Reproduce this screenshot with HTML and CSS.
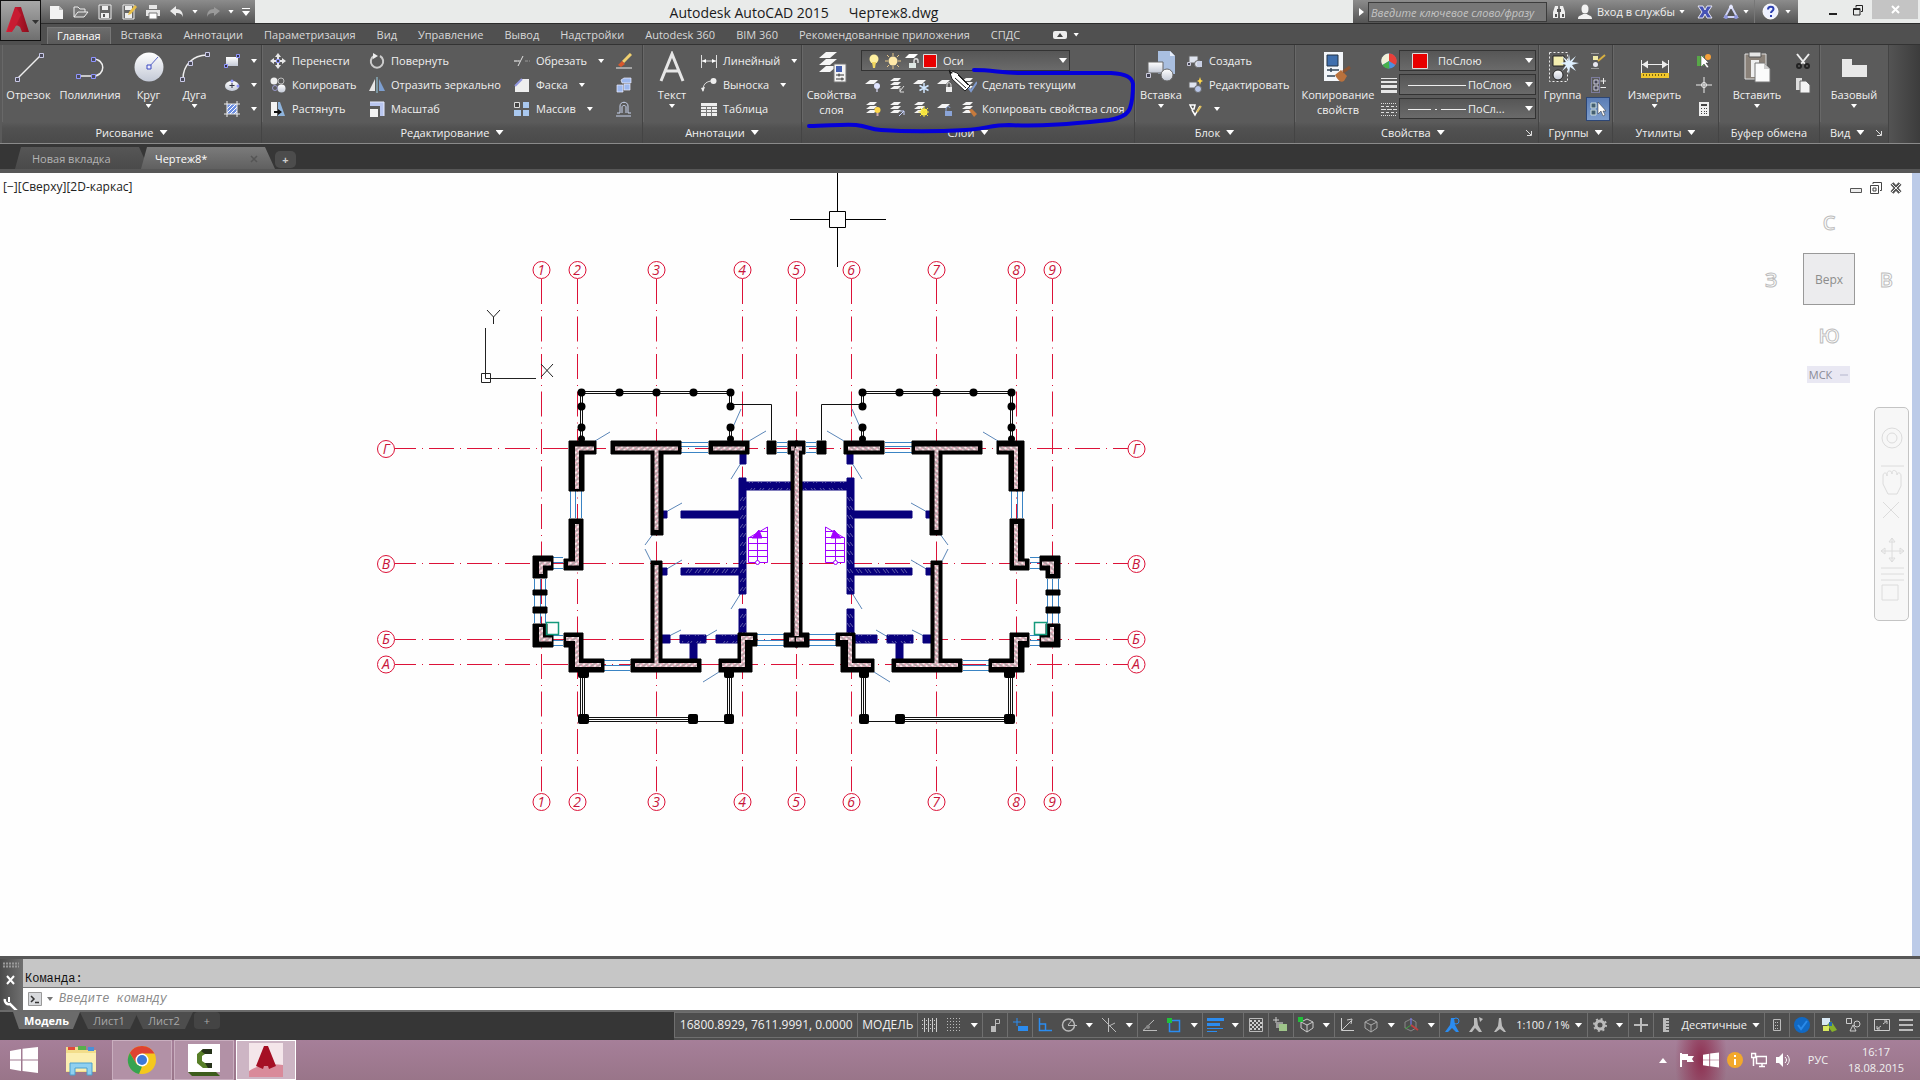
FILE: index.html
```html
<!DOCTYPE html>
<html lang="ru">
<head>
<meta charset="utf-8">
<title>Autodesk AutoCAD 2015 Чертеж8.dwg</title>
<link rel="stylesheet" href="styles.css">
</head>
<body>
<svg class="defs" width="0" height="0" aria-hidden="true">
  <defs>
    <linearGradient id="silver" x1="0" y1="0" x2="0" y2="1"><stop offset="0" stop-color="#fff"/><stop offset="1" stop-color="#c3c9d6"/></linearGradient>
    <linearGradient id="ruby" x1="0" y1="0" x2="1" y2="0"><stop offset="0" stop-color="#e0243c"/><stop offset="1" stop-color="#8d0c1c"/></linearGradient>
    <symbol id="i-sheets" viewBox="0 0 16 16"><path d="M5 1h7l-3 3H1zM5 5h7l-3 3H1zM5 9h7l-3 3H1z" fill="#f4f4f4"/></symbol>
    <symbol id="i-sheet" viewBox="0 0 16 16"><path d="M5 3h8l-4 4H0z" fill="#f4f4f4"/></symbol>
    <symbol id="i-winlogo" viewBox="0 0 28 26"><path d="M0 4l11-2v10.500H0zM12.500 1.800L28 0v12.500H12.500zM0 13.500h11V24L0 22zM12.500 13.500H28V26l-15.500-2z" fill="#fff"/></symbol>
  </defs>
</svg>

<header class="top">
  <button class="app-button" aria-label="Меню приложения">
    <svg width="38" height="38" viewBox="0 0 38 38"><path d="M13 5h6l8 25h-7l-2-5c-2-2-4-2-5 0l-3 5H4z" fill="url(#ruby)"/><path d="M14 5l-9 25 7-3 4-8 3-6z" fill="#c81c32"/><path d="M30 18h7l-3.500 4z" fill="#333"/></svg>
  </button>
  <div class="titlebar">
    <div class="qat">
      <button aria-label="Создать"><svg width="16" height="16"><path d="M1 2h9l4 4v9H1z" fill="#f2f2f2"/><path d="M10 2v4h4" fill="#bbb"/></svg></button>
      <button aria-label="Открыть"><svg width="16" height="16"><path d="M1 13V3h4l2 2h5v3M1 13L5 8h10l-4 5z" fill="#777" stroke="#eee"/></svg></button>
      <button aria-label="Сохранить"><svg width="16" height="16"><path d="M2 1h12v14H2z" fill="#666" stroke="#eee"/><path d="M5 2h6v4H5zM4 9h8v5H4z" fill="#eee"/><path d="M6 10h2v3H6z" fill="#555"/></svg></button>
      <button aria-label="Сохранить как"><svg width="16" height="16"><path d="M2 1h11v14H2z" fill="#666" stroke="#eee"/><path d="M4 9h7v5H4zM4 2h7v4H4z" fill="#eee"/><path d="M7 11l1-3 6-7 2 2-6 7z" fill="#e9c04a"/></svg></button>
      <button aria-label="Печать"><svg width="16" height="16"><path d="M4 1h8v4H4zM1 6h14v6H1z" fill="#e6e6e6"/><path d="M4 9h8v6H4z" fill="#fff" stroke="#777"/></svg></button>
      <button aria-label="Отменить"><svg width="16" height="16"><path d="M7 2L1 7l6 5V9c4 0 6 1 7 4 0-5-2-8-7-8z" fill="#eaeaea"/></svg></button>
      <button class="narrow" aria-label="Список отмены"><i class="caret"></i></button>
      <button aria-label="Повторить"><svg width="16" height="16"><path d="M9 3l6 4-6 5V9C5 9 3 10 2 13c0-5 2-8 7-8z" fill="#9a9a9a"/></svg></button>
      <button class="narrow" aria-label="Список повтора"><i class="caret"></i></button>
      <button class="more" aria-label="Настройка панели"><svg width="10" height="10"><path d="M1 1h8v1H1zM1 4h8L5 9z" fill="#fff"/></svg></button>
    </div>
    <div class="caption"><span>Autodesk AutoCAD 2015</span><span>Чертеж8.dwg</span></div>
    <div class="infocenter">
      <button class="expand" aria-label="Свернуть"><svg width="6" height="8"><path d="M1 0l5 4-5 4z" fill="#fff"/></svg></button>
      <input type="text" aria-label="Поиск" placeholder="Введите ключевое слово/фразу">
      <button aria-label="Найти"><svg width="16" height="16"><path d="M2 14V8l2-6h3v12zM9 14V2h3l2 6v6z" fill="#eee"/><path d="M4 10h2v3H4zM11 10h2v3h-2zM6 5h4v3H6z" fill="#555"/></svg></button>
      <button class="signin"><svg width="16" height="16"><ellipse cx="8" cy="5" rx="3.500" ry="4.500" fill="#f2f2f2"/><path d="M1 15c0-4 3-3 5-5h4c2 2 5 1 5 5z" fill="#f2f2f2"/></svg><span>Вход в службы</span><i class="caret"></i></button>
      <button aria-label="Exchange" class="wide"><svg width="16" height="16"><path d="M1 2h5l2 4 2-4h5l-4 6 4 6h-5l-2-4-2 4H1l4-6z" fill="#4653b4" stroke="#e8e8f4"/></svg></button>
      <button aria-label="Подключение"><svg width="16" height="16"><path d="M8 2l6 11H2z" fill="#555" stroke="#cfd3f5" stroke-width="2"/><circle cx="8" cy="3" r="2" fill="#e8eaff"/><circle cx="3" cy="13" r="2" fill="#8f97dc"/><circle cx="13" cy="13" r="2" fill="#8f97dc"/></svg><i class="caret"></i></button>
      <button aria-label="Справка" class="help"><svg width="17" height="17"><circle cx="8.500" cy="8.500" r="7.500" fill="#eef1ff" stroke="#fff"/><path d="M6 6.500c0-4 5.500-3.500 5.500-.5 0 2-2.500 2-2.500 4M9 12v2" stroke="#2c3fb0" stroke-width="2" fill="none"/></svg><i class="caret"></i></button>
    </div>
    <div class="window-buttons">
      <button aria-label="Свернуть окно"><svg width="10" height="12"><path d="M1 8h8v2H1z" fill="#222"/></svg></button>
      <button aria-label="Восстановить"><svg width="10" height="11"><path d="M3 2.500V.5h6.500v6H8M.5 3.500h6.500v6.500H.5zM.5 4.500H7" fill="none" stroke="#222"/></svg></button>
      <button class="close" aria-label="Закрыть"><svg width="9" height="9"><path d="M1 1l7 7M8 1L1 8" stroke="#fff" stroke-width="2"/></svg></button>
    </div>
  </div>
  <nav class="ribbon-tabs">
    <button class="active">Главная</button><button>Вставка</button><button>Аннотации</button><button>Параметризация</button><button>Вид</button><button>Управление</button><button>Вывод</button><button>Надстройки</button><button>Autodesk 360</button><button>BIM 360</button><button>Рекомендованные приложения</button><button>СПДС</button>
    <button class="ribbon-mode" aria-label="Вид ленты"><svg width="14" height="8"><rect width="14" height="8" rx="2" fill="#eee"/><path d="M7 2l3 4H4z" fill="#444"/></svg><i class="caret"></i></button>
  </nav>
</header>

<div class="ribbon">
  <section class="panel draw">
    <div class="panel-body">
      <button class="big"><svg width="32" height="32"><path d="M4 28L28 4" stroke="#eee" stroke-width="1.500"/><path d="M2.500 26.500h4v4h-4zM26.500 2.500h4v4h-4z" fill="#4a4a5a" stroke="#c9c9e6"/></svg><span>Отрезок</span></button>
      <button class="big"><svg width="32" height="32"><path d="M4 25h15c13 0 13-17 0-17" stroke="#eee" stroke-width="1.500" fill="none"/><path d="M2.500 23.500h4v4h-4zM17.500 23.500h4v4h-4zM17.500 6.500h4v4h-4z" fill="#4a4a5a" stroke="#8f95ff"/></svg><span>Полилиния</span></button>
      <button class="big"><svg width="32" height="32"><circle cx="16" cy="16" r="14.500" fill="url(#silver)"/><path d="M16 16l9-10" stroke="#5a66c8"/><path d="M14 14h4v4h-4z" fill="#eef" stroke="#3a48c0"/></svg><span>Круг</span><i class="caret"></i></button>
      <button class="big"><svg width="32" height="32"><path d="M4 28C4 14 14 4 28 4" stroke="#eee" stroke-width="1.500" fill="none"/><path d="M1.500 26.500h4v4h-4zM26.500 1.500h4v4h-4zM9.500 10.500h4v4h-4z" fill="#4a4a5a" stroke="#c9c9e6"/></svg><span>Дуга</span><i class="caret"></i></button>
      <div class="col">
        <button class="tool" aria-label="Прямоугольник"><svg width="16" height="16"><path d="M2 4h12v9H2z" fill="url(#silver)"/><path d="M.5 11.500h3v3h-3zM12.500 1.500h3v3h-3z" fill="#334" stroke="#8f95ff"/></svg><i class="caret"></i></button>
        <button class="tool" aria-label="Эллипс"><svg width="16" height="16"><ellipse cx="8" cy="9" rx="7" ry="5" fill="url(#silver)"/><path d="M8 6v5M5.500 8.500h5" stroke="#334"/><circle cx="8" cy="4" r="1.500" fill="#8f95ff"/><circle cx="14" cy="9" r="1.500" fill="#8f95ff"/></svg><i class="caret"></i></button>
        <button class="tool" aria-label="Штриховка"><svg width="16" height="16"><path d="M3 3h10v10H3z" fill="#6d8fe0"/><path d="M3 8l5-5M3 12l9-9M6 13l7-7M10 13l3-3" stroke="#fff"/><path d="M3 0v16M13 0v16M0 3h16M0 13h16" stroke="#eee"/></svg><i class="caret"></i></button>
      </div>
    </div>
    <h2 class="panel-title">Рисование<i class="caret lg"></i></h2>
  </section>

  <section class="panel modify">
    <div class="panel-body">
      <div class="col">
        <button class="tool"><svg width="16" height="16"><path d="M8 0l3 4H9v3H7V4H5zM8 16l3-4H9V9H7v3H5zM0 8l4-3v2h3v2H4v2zM16 8l-4-3v2H9v2h3v2z" fill="#e8e8e8"/><path d="M6.500 6.500h3v3h-3z" fill="#444" stroke="#8f95ff"/></svg><span>Перенести</span></button>
        <button class="tool"><svg width="16" height="16"><circle cx="4" cy="4" r="3.500" fill="#eee"/><circle cx="11" cy="4" r="3" fill="none" stroke="#bbb"/><circle cx="11.500" cy="11.500" r="4" fill="url(#silver)"/><circle cx="5" cy="11" r="2.500" fill="none" stroke="#99c"/></svg><span>Копировать</span></button>
        <button class="tool"><svg width="16" height="16"><path d="M1 1h6v14H1z" fill="#f4f4f4"/><path d="M8 1h2l5 14H8z" fill="#8fb5de"/><path d="M4 10h4V8l4 3-4 3v-2H4z" fill="#111"/></svg><span>Растянуть</span></button>
      </div>
      <div class="col">
        <button class="tool"><svg width="16" height="16"><path d="M5 3a6.200 6.200 0 1 0 6 0" stroke="#ccc" stroke-width="2" fill="none"/><path d="M4 0l5 3-5 3z" fill="#eee"/></svg><span>Повернуть</span></button>
        <button class="tool"><svg width="16" height="16"><path d="M6 2v12H0z" fill="#e8e8e8"/><path d="M10 2v12h6z" fill="#7d9fd0"/><path d="M8 0v16" stroke="#9fd4e8"/></svg><span>Отразить зеркально</span></button>
        <button class="tool"><svg width="16" height="16"><path d="M1 1h14v14h-4V5H1z" fill="#b9c6ef"/><path d="M1 8h8v8H1z" fill="#f3f3f3"/><path d="M1 1h14v14" fill="none" stroke="#e8ecff"/></svg><span>Масштаб</span></button>
      </div>
      <div class="col">
        <button class="tool"><svg width="16" height="16"><path d="M0 8h5M11 8h5" stroke="#999" stroke-dasharray="3 1"/><path d="M4 13l5-10M0 8h6" stroke="#e0e0e0"/></svg><span>Обрезать</span><i class="caret"></i></button>
        <button class="tool"><svg width="16" height="16"><path d="M1 15V9l7-7h7v13z" fill="#eee"/><path d="M1 9l7-7" stroke="#8f95dd" stroke-width="2"/></svg><span>Фаска</span><i class="caret"></i></button>
        <button class="tool"><svg width="16" height="16"><path d="M.5 1.500h5v5h-5z" fill="#444" stroke="#ddd"/><path d="M9 1h6v6H9zM0 9h7v6H0zM9 9h6v6H9z" fill="#a9c8ef"/></svg><span>Массив</span><i class="caret"></i></button>
      </div>
      <div class="col">
        <button class="tool" aria-label="Стереть"><svg width="16" height="16"><path d="M15 1L7 9" stroke="#f0d070" stroke-width="3"/><path d="M6 8l3 3-4 3-3-2z" fill="#d8582c"/><path d="M0 15h16" stroke="#eee"/></svg></button>
        <button class="tool" aria-label="Расчленить"><svg width="16" height="16"><path d="M1 8h6v7H1zM8 7h6v6H8zM5 3l3-2h7v5H6z" fill="#9db8ee" stroke="#eef" stroke-width=".7"/></svg></button>
        <button class="tool" aria-label="Подобие"><svg width="16" height="16"><path d="M0 15h15M1 12h3V5c0-5 8-5 8 0v7h3M6 12V6c0-2 4-2 4 0v6" fill="none" stroke="#c9d4ee"/></svg></button>
      </div>
    </div>
    <h2 class="panel-title">Редактирование<i class="caret lg"></i></h2>
  </section>

  <section class="panel annotate">
    <div class="panel-body">
      <button class="big"><svg width="32" height="32"><path d="M5 30L16 3l11 27M9 20h14" fill="none" stroke="#e6e6e6" stroke-width="3"/></svg><span>Текст</span><i class="caret"></i></button>
      <div class="col">
        <button class="tool"><svg width="16" height="16"><path d="M.5 2v13M15.500 2v13M1 8h14" stroke="#ddd"/><path d="M1 8l4-2v4zM15 8l-4-2v4z" fill="#fff"/></svg><span>Линейный</span><i class="caret"></i></button>
        <button class="tool"><svg width="16" height="16"><path d="M2 14c0-6 2-9 8-10" fill="none" stroke="#ddd"/><path d="M0 11l4-1-2 5z" fill="#eee"/><circle cx="12.500" cy="4" r="3" fill="#eee"/></svg><span>Выноска</span><i class="caret"></i></button>
        <button class="tool"><svg width="16" height="16"><path d="M0 2h16v13H0z" fill="#eee"/><path d="M0 5.500h16M0 8.500h16M0 11.500h16M5.500 5v10M10.500 5v10" stroke="#777"/></svg><span>Таблица</span></button>
      </div>
    </div>
    <h2 class="panel-title">Аннотации<i class="caret lg"></i></h2>
  </section>

  <section class="panel layers">
    <div class="panel-body">
      <button class="big"><svg width="32" height="32"><path d="M10 1h11l-7 6H3zM10 8h11l-7 6H3zM10 15h11l-7 6H3z" fill="#f6f6f6"/><path d="M18 13h12v18H18z" fill="#f4f4f4" stroke="#777"/><path d="M20 15h6v6h-6z" fill="#445fae"/><path d="M20 24h8M20 28h8M23 22.500v3M26 26.500v3" stroke="#333"/></svg><span>Свойства<br>слоя</span></button>
      <div class="col">
        <div class="combo layer-combo">
          <svg width="16" height="16"><circle cx="8" cy="6" r="4.500" fill="#fff0a0"/><path d="M6 9h4l-1 6H7z" fill="#f3d860"/></svg>
          <svg width="16" height="16"><circle cx="8" cy="8" r="4.500" fill="#ffe9a8"/><path d="M8 0v3M8 13v3M0 8h3M13 8h3M2 2l2 2M12 12l2 2M14 2l-2 2M2 14l2-2" stroke="#e8c888"/></svg>
          <svg width="16" height="16"><path d="M5 1h9l-4 4H1z" fill="#fff"/><path d="M5 10h7v5H5z" fill="#dfe8e4"/><path d="M10 10V8c0-3 4-3 4 0v2" stroke="#ddd" fill="none" stroke-width="1.500"/></svg>
          <svg width="14" height="14"><path d="M.5.5h13v13H.5z" fill="#e80000" stroke="#ddd"/></svg>
          <select aria-label="Текущий слой"><option>Оси</option></select><i class="caret lg"></i>
        </div>
        <div class="icon-row">
          <button aria-label="Отключить слой"><svg width="16" height="16"><use href="#i-sheet"/><circle cx="12" cy="9" r="3" fill="#dfe4ff"/><path d="M11 12h2v3h-2z" fill="#aab"/></svg></button>
          <button aria-label="Изолировать слой"><svg width="16" height="16"><use href="#i-sheets"/><path d="M15 9l-4 5M11 11v4h4" stroke="#ddd" fill="none"/></svg></button>
          <button aria-label="Заморозить слой"><svg width="16" height="16"><use href="#i-sheet"/><path d="M11 6v10M6.500 8.500l9 5M15.500 8.500l-9 5" stroke="#cfe6ff" stroke-width="1.500"/></svg></button>
          <button aria-label="Блокировать слой"><svg width="16" height="16"><use href="#i-sheet"/><path d="M9 10h6v5H9z" fill="#eee"/><path d="M10 10V8c0-3 4-3 4 0v2" stroke="#ddd" fill="none"/></svg></button>
          <button class="tool"><svg width="16" height="16"><use href="#i-sheets"/><path d="M7 10l3 4 6-9" stroke="#7f9bd0" stroke-width="2" fill="none"/></svg><span>Сделать текущим</span></button>
        </div>
        <div class="icon-row">
          <button aria-label="Включить все слои"><svg width="16" height="16"><use href="#i-sheets"/><circle cx="12.500" cy="9" r="3" fill="#ffd84a"/><path d="M11.500 12h2v3h-2z" fill="#caa"/></svg></button>
          <button aria-label="Отменить изоляцию"><svg width="16" height="16"><use href="#i-sheets"/><path d="M10 15l5-5M11 10h4v4" stroke="#c9d4ff" fill="none"/></svg></button>
          <button aria-label="Разморозить все слои"><svg width="16" height="16"><use href="#i-sheets"/><circle cx="11" cy="11" r="3.500" fill="#fff14a"/><path d="M11 5.500v11M5.500 11h11M7 7l8 8M15 7l-8 8" stroke="#f3df3a"/></svg></button>
          <button aria-label="Разблокировать слой"><svg width="16" height="16"><use href="#i-sheet"/><path d="M8 10h7v5H8z" fill="#8aa4d8"/><path d="M9 10V8c0-3 4-3 4-1" stroke="#8aa4d8" fill="none"/></svg></button>
          <button class="tool"><svg width="16" height="16"><use href="#i-sheets"/><path d="M8 9l3-1 5 5-3 3z" fill="#c77a3c"/></svg><span>Копировать свойства слоя</span></button>
        </div>
      </div>
    </div>
    <h2 class="panel-title">Слои<i class="caret lg"></i></h2>
  </section>

  <section class="panel block">
    <div class="panel-body">
      <button class="big"><svg width="32" height="32"><path d="M13 0h12l5 5v18H13z" fill="#a9bfe0"/><path d="M25 0v5h5" fill="#e6eefc"/><path d="M3 11h15v11H3z" fill="url(#silver)" stroke="#666"/><circle cx="22" cy="24" r="6" fill="url(#silver)" stroke="#666"/><path d="M1.500 22.500h4v4h-4z" fill="#445" stroke="#ccd"/></svg><span>Вставка</span><i class="caret"></i></button>
      <div class="col">
        <button class="tool"><svg width="16" height="16"><path d="M2 3h9v7H2z" fill="#dfe4ef" stroke="#666"/><circle cx="11" cy="11" r="3.500" fill="#dfe4ef" stroke="#666"/><path d="M10 8h5v6h-5z" fill="#c9d0e4"/><path d="M.5 9.500h3v3h-3z" fill="#445" stroke="#ccd"/></svg><span>Создать</span></button>
        <button class="tool"><svg width="16" height="16"><path d="M2 5h8v6H2z" fill="#dfe4ef" stroke="#666"/><circle cx="11" cy="12" r="3.500" fill="#b8c6e8" stroke="#666"/><path d="M13 0l1 3 2 1-2 1-1 3-1-3-2-1 2-1z" fill="#ffd84a"/></svg><span>Редактировать</span></button>
        <button class="tool" aria-label="Атрибуты"><svg width="16" height="16"><path d="M3 4h5l-1 4H5zM5 9l3 5 5-9" fill="none" stroke="#fff" stroke-width="1.500"/><path d="M10 11l4-6" stroke="#e0c060" stroke-width="2"/></svg><i class="caret"></i></button>
      </div>
    </div>
    <h2 class="panel-title">Блок<i class="caret lg"></i></h2>
  </section>

  <section class="panel props">
    <div class="panel-body">
      <button class="big"><svg width="32" height="32"><path d="M2 1h19v29H2z" fill="#f3f6fa"/><path d="M5 4h11v11H5z" fill="#3f6fae" stroke="#234"/><path d="M5 19h12M5 25h8M9 17v4" stroke="#345" stroke-width="1.500"/><path d="M13 24l6-5 6 6-3 5c-4 2-6-1-9-6z" fill="#b9713c"/><path d="M21 21l7-5" stroke="#8a5230" stroke-width="3"/></svg><span>Копирование<br>свойств</span></button>
      <div class="col prop-icons">
        <svg width="16" height="16"><circle cx="8" cy="8" r="7.500" fill="#4d8fe0"/><path d="M8 8V.5A7.500 7.500 0 0 1 14.500 12z" fill="#e8403a"/><path d="M8 8V.5A7.500 7.500 0 0 0 1.500 12z" fill="#f2f0d8"/><path d="M8 8l-6.500 4a7.500 7.500 0 0 0 7 3.500z" fill="#48b04a"/></svg>
        <svg width="16" height="16"><path d="M0 1h16v1H0zM0 4h16v2H0zM0 8h16v3H0zM0 13h16v3H0z" fill="#e6e6e6"/></svg>
        <svg width="16" height="16"><path d="M0 2.500h16M0 14.500h16" stroke="#ddd" stroke-dasharray="1 1"/><path d="M0 5.500h16M0 11.500h16" stroke="#ddd" stroke-dasharray="3 2"/><path d="M0 8.500h16" stroke="#ddd" stroke-dasharray="5 1"/></svg>
      </div>
      <div class="col prop-combos">
        <div class="combo"><svg class="swatch" width="16" height="16"><path d="M.5.500h15v15H.5z" fill="#e80000" stroke="#ddd"/></svg><select aria-label="Цвет"><option>ПоСлою</option></select><i class="caret lg"></i></div>
        <div class="combo line"><svg width="58" height="4"><path d="M0 2.500h58" stroke="#eee"/></svg><select aria-label="Вес линий"><option>ПоСлою</option></select><i class="caret lg"></i></div>
        <div class="combo line"><svg width="58" height="4"><path d="M0 2.500h23M27 2.500h2M33 2.500h25" stroke="#eee"/></svg><select aria-label="Тип линий"><option>ПоСл...</option></select><i class="caret lg"></i></div>
      </div>
    </div>
    <h2 class="panel-title">Свойства<i class="caret lg"></i><svg class="launcher" width="6" height="6"><path d="M0 0l5 5M5.500 1v4.500H1" stroke="#ddd" fill="none"/></svg></h2>
  </section>

  <section class="panel groups">
    <div class="panel-body">
      <button class="big"><svg width="32" height="32"><path d="M2.500 1.500h18v29h-18z" fill="none" stroke="#eee" stroke-dasharray="2 2"/><path d="M6 5h11v10H6z" fill="#f5efb0" stroke="#222"/><circle cx="11" cy="24" r="5" fill="url(#silver)" stroke="#222"/><path d="M22 3l1 7 6-5-4 6 7 1-7 2 4 6-6-4-1 7-2-7-5 4 4-6-6-2 6-1-4-6 6 5z" fill="#dff0ff"/></svg><span>Группа</span></button>
      <div class="col">
        <button class="tool" aria-label="Редактировать группу"><svg width="16" height="16"><path d="M1.500.500h8M1.500 15.500h8" stroke="#ddd" stroke-dasharray="1 1"/><path d="M3 3h5v4H3z" fill="#f0eaa8"/><circle cx="5.500" cy="11.500" r="2.500" fill="#e8e8f0"/><path d="M8 8l7-6" stroke="#d8b040" stroke-width="2"/></svg></button>
        <button class="tool" aria-label="Разгруппировать"><svg width="16" height="16"><path d="M1.500.500h8v15h-8z" fill="none" stroke="#9f9fe0" stroke-dasharray="1 1"/><path d="M4 3h4v4H4zM4 9h4v4H4z" fill="#445" stroke="#ccd"/><path d="M13.500 1v6M10.500 4h6M10.500 10.500h6" stroke="#eee"/></svg></button>
        <button class="tool pressed" aria-label="Выбор групп"><svg width="16" height="16"><path d="M1 2h5v5H1zM1 9h5v5H1z" fill="#445f70" stroke="#cdd"/><path d="M8 1v12l3-3 2 5 2-1-2-4h3z" fill="#fff" stroke="#333" stroke-width=".5"/></svg></button>
      </div>
    </div>
    <h2 class="panel-title">Группы<i class="caret lg"></i></h2>
  </section>

  <section class="panel utils">
    <div class="panel-body">
      <button class="big"><svg width="32" height="32"><path d="M2.500 9v13M29.500 9v13M3 13.500h26" stroke="#eee"/><path d="M3 13.500l6-4v8zM29 13.500l-6-4v8z" fill="#eee"/><path d="M2 22h28v5H2z" fill="#f0c62c"/><path d="M4.500 23v2M7.500 23v2M10.500 23v2M13.500 23v2M16.500 23v2M19.500 23v2M22.500 23v2M25.500 23v2" stroke="#7a6410"/></svg><span>Измерить</span><i class="caret"></i></button>
      <div class="col">
        <button class="tool" aria-label="Быстрый выбор"><svg width="16" height="16"><path d="M1 3h7v10H1z" fill="#58a848"/><path d="M5 2v12l3-3 3 4 2-1-3-4h3z" fill="#fff" stroke="#333" stroke-width=".5"/><circle cx="12" cy="4" r="3" fill="#f5a03a"/></svg></button>
        <button class="tool" aria-label="Координаты точки"><svg width="16" height="16"><path d="M8 0v16M0 8h16" stroke="#eee"/><circle cx="8" cy="8" r="2.500" fill="none" stroke="#eee"/></svg></button>
        <button class="tool" aria-label="Калькулятор"><svg width="16" height="16"><path d="M3 1h10v14H3z" fill="#eee"/><path d="M5 3h6v2H5zM5 7h1v1H5zM8 7h1v1H8zM10 7h1v1h-1zM5 10h1v1H5zM8 10h1v1H8zM10 10h1v1h-1zM5 12h1v1H5zM8 12h1v1H8zM10 12h1v1h-1z" fill="#444"/></svg></button>
      </div>
    </div>
    <h2 class="panel-title">Утилиты<i class="caret lg"></i></h2>
  </section>

  <section class="panel clipboard">
    <div class="panel-body">
      <button class="big"><svg width="32" height="32"><path d="M4 3h21v25H4z" fill="#8a8178" stroke="#ddd"/><path d="M8 1h12v5H8z" fill="#e6e6e6" stroke="#555"/><path d="M10 9h8v17h-8z" fill="#efefef"/><path d="M14 12h9l6 6v13H14z" fill="#fbfbfb" stroke="#777"/><path d="M23 12v6h6" fill="#ccc"/></svg><span>Вставить</span><i class="caret"></i></button>
      <div class="col">
        <button class="tool" aria-label="Вырезать"><svg width="16" height="16"><path d="M2 1l8 10M14 1L6 11" stroke="#eee" stroke-width="2"/><circle cx="4" cy="13" r="2" fill="none" stroke="#222" stroke-width="2"/><circle cx="12" cy="13" r="2" fill="none" stroke="#222" stroke-width="2"/></svg></button>
        <button class="tool" aria-label="Копировать"><svg width="16" height="16"><path d="M1 1h6v12H1z" fill="#ddd"/><path d="M5 4h6l4 4v8H5z" fill="#f4f4f4" stroke="#666"/></svg></button>
      </div>
    </div>
    <h2 class="panel-title">Буфер обмена</h2>
  </section>

  <section class="panel view">
    <div class="panel-body">
      <button class="big"><svg width="32" height="32"><path d="M4 8h10v6h15v12H4z" fill="#e8e8e8"/></svg><span>Базовый</span><i class="caret"></i></button>
    </div>
    <h2 class="panel-title">Вид<i class="caret lg"></i><svg class="launcher" width="6" height="6"><path d="M0 0l5 5M5.500 1v4.500H1" stroke="#ddd" fill="none"/></svg></h2>
  </section>

  <svg class="marker" viewBox="0 0 340 90" width="340" height="90">
    <path d="M8 61c18 0 34-2 47-1s13 5 25 5c30 2 50 2 85 0 18-1 26-5 43-5 33 2 70-2 100-5 13-2 19-6 21-12 3-8 3-15 3-24-1-7-7-10-22-11l-90 0c-20 0-28-3-47-3" fill="none" stroke="#0500d8" stroke-width="4" stroke-linecap="round" stroke-linejoin="round"/>
    <path d="M148 5l3 9 13 12 5-5L156 8z" fill="#fff" stroke="#222"/><path d="M154 13l11 10M157 10l10 10" stroke="#222"/><path d="M148 5l1 4 3-1z" fill="#111"/>
  </svg>
</div>

<nav class="file-tabs">
  <button class="file-tab">Новая вкладка</button>
  <button class="file-tab active"><span>Чертеж8*</span><svg width="8" height="8"><path d="M1 1l6 6M7 1L1 7" stroke="#555" stroke-width="1.500"/></svg></button>
  <button class="add-tab" aria-label="Новый чертеж">+</button>
</nav>

<main class="viewport">
  <svg class="drawing" viewBox="0 173 1912 783" preserveAspectRatio="xMidYMid slice">
    <defs>
      <pattern id="hatch" width="4" height="4" patternUnits="userSpaceOnUse" patternTransform="rotate(-38)"><rect width="4" height="4" fill="#f6e8ea"/><path d="M0 1h4" stroke="#6a5058" stroke-width=".9"/><path d="M0 3h2" stroke="#d8587c" stroke-width=".8"/></pattern>
      <pattern id="navyhatch" width="9" height="9" patternUnits="userSpaceOnUse"><path d="M2 6l3-4M5 6l3-4" stroke="#7474b0" stroke-width=".8"/></pattern>
      <g id="bubbles" fill="none">
        <circle cx="541.500" r="8.500"/><circle cx="577.500" r="8.500"/><circle cx="656.500" r="8.500"/><circle cx="742.500" r="8.500"/><circle cx="796.500" r="8.500"/><circle cx="851.500" r="8.500"/><circle cx="936.500" r="8.500"/><circle cx="1016.500" r="8.500"/><circle cx="1052.500" r="8.500"/>
      </g>
      <g id="numbers"><text x="541">1</text><text x="577">2</text><text x="656">3</text><text x="742">4</text><text x="796">5</text><text x="851">6</text><text x="936">7</text><text x="1016">8</text><text x="1052">9</text></g>
      <g id="half" fill="none">
        <g stroke="#3a84c4">
          <path d="M681 442.500h27M681 446.500h27M681 452.500h27M777 442.500h10M777 446.500h10M777 452.500h10M570.500 491v27M575.500 491v27M581.500 491v27M553 557.500h10M553 562.500h10M553 568.500h10M534.500 579v44M540.500 579v44M545.500 579v44M553 635.500h10M553 640.500h10M553 645.500h10M604 660.500h26M604 665.500h26M604 670.500h26M757 634.500h27M757 640.500h27M757 645.500h27"/>
        </g>
        <g stroke="#5b86b8">
          <path d="M595 441l15-9M731 479l10-16M733 427l8-18M749 441l17-10M664 513l18-10M653 534l-8 11M645 549l6 12M665 570l17-10M741 593l-10 16M667 637l14-7M705 637l12-7M703 682l16-10"/>
        </g>
        <g stroke="#111">
          <path d="M581 391.500h150M581 393.500h150M580.500 392v48M582.500 392v48M729.500 392v14M731.500 392v14M729.500 427v13M731.500 427v13M731 404.500h40.500v36"/>
          <path d="M580.500 677v38M582.500 677v38M584.500 677v38M727.500 677v38M729.500 677v38M731.500 677v38M588 717.500h100M588 719.500h100M588 721.500h100M698 721.500h26"/>
        </g>
        <g fill="#000">
          <circle cx="581.500" cy="392.500" r="4"/><circle cx="619.500" cy="392.500" r="4"/><circle cx="656.500" cy="392.500" r="4"/><circle cx="693.500" cy="392.500" r="4"/><circle cx="730.500" cy="392.500" r="4"/>
          <circle cx="581.500" cy="406.500" r="4"/><circle cx="581.500" cy="427.500" r="4"/><circle cx="581.500" cy="439" r="3.500"/><circle cx="730.500" cy="406.500" r="4"/><circle cx="730.500" cy="427.500" r="4"/><circle cx="730.500" cy="439" r="3.500"/>
          <rect x="578" y="668" width="11" height="10" rx="2"/><rect x="578" y="714" width="11" height="10" rx="2"/><rect x="688" y="714" width="10" height="10" rx="2"/><rect x="724" y="714" width="10" height="10" rx="2"/><rect x="724" y="668" width="10" height="10" rx="2"/>
        </g>
        <path d="M740 451h6v13h-6zM681 511h59v7h-59zM657 511h10v7h-10zM681 568h59v7h-59zM657 568h10v7h-10zM739 478h7v116h-7zM739 609h7v26h-7zM657 635h13v8h-13zM680 635h26v8h-26zM716 635h24v8h-24zM690 641h7v20h-7zM744 482h50v8h-50z" fill="#08007c" stroke="#08007c" stroke-linejoin="round"/>
        <path d="M746 482h44v8h-44zM740 492h6v100h-6zM684 568h54v7h-54zM740 611h6v22h-6zM682 635h24v8h-24zM720 635h18v8h-18z" fill="url(#navyhatch)"/>
        <g fill="#000" stroke="#000" stroke-linejoin="round">
          <path d="M569 441h27v13h-12v37h-15zM611 441h70v13h-18v81h-12v-81h-40zM709 441h40v13h-40zM767 441h9v13h-9zM788 441h10v206h-14v-14h7v-179h-3zM569 519h14v51h-19v-11h5zM533 556h20v14h-6v8h-14zM533 590h14v5h-14zM533 607h14v6h-14zM533 624h14v11h6v12h-20zM564 633h19v26h21v13h-35v-25h-5zM631 659h20v-98h11v98h39v13h-70zM719 659h19v-26h19v13h-5v26h-33z"/>
        </g>
        <path d="M594 448.500h-17V489M615 448.500h63M656.500 448v82M713 448.500h32M791 448.500h6M796 448v188M577 524v39.500h-9M551 563.500h-10V574M541 627v12.500h11M566 639h11v26h24M635 665h62M656.500 565v100M722 665h21v-27h10M789 639.500h8" stroke="url(#hatch)" stroke-width="4"/>
        <path d="M546.500 622.500h12v12h-12z" stroke="#149a7c" stroke-width="1.500"/>
        <g stroke="#a000ff">
          <path d="M748.500 562.500V538l19-11v35.500zM757.500 531.500h10M748.500 537.500h19M748.500 543.500h19M748.500 550.500h19M748.500 556.500h19M757.500 537v24"/>
          <path d="M752 538l7-8 3 8z" fill="#a000ff"/><circle cx="757.500" cy="562.500" r="2" fill="#fff"/>
        </g>
      </g>
    </defs>
    <g class="axes">
      <path stroke-dasharray="25 6 1 5.500" d="M541.500 279v515M577.500 279v515M656.500 279v515M742.500 279v515M796.500 279v515M851.500 279v515M936.500 279v515M1016.500 279v515M1052.500 279v515"/>
      <path stroke-dasharray="25 6 1 6" stroke-dashoffset="4" d="M395 448.500h733M395 563.500h733M395 639.500h733M395 664.500h733"/>
      <use href="#bubbles" y="270"/><use href="#bubbles" y="802"/>
      <circle cx="386" cy="449" r="8.500"/><circle cx="386" cy="564" r="8.500"/><circle cx="386" cy="639.500" r="8.500"/><circle cx="386" cy="664.500" r="8.500"/>
      <circle cx="1136.500" cy="449" r="8.500"/><circle cx="1136.500" cy="564" r="8.500"/><circle cx="1136.500" cy="639.500" r="8.500"/><circle cx="1136.500" cy="664.500" r="8.500"/>
    </g>
    <use href="#half"/>
    <use href="#half" transform="translate(1593 0) scale(-1 1)"/>
    <g class="labels">
      <use href="#numbers" y="275"/><use href="#numbers" y="807"/>
      <text x="386" y="454">Г</text><text x="386" y="569">В</text><text x="386" y="644">Б</text><text x="386" y="669">А</text>
      <text x="1136" y="454">Г</text><text x="1136" y="569">В</text><text x="1136" y="644">Б</text><text x="1136" y="669">А</text>
    </g>
    <g fill="none" stroke="#222">
      <path d="M485.500 328v50.500H536M481.500 373.500h9v9h-9zM487 310l6.500 7 6.500-7M493.500 317v7M541 364l12 13M553 364l-12 13"/>
      <path stroke="#000" d="M837.500 173v38M837.500 227v40M790 219.500h40M846 219.500h40M829.500 211.500h16v16h-16z"/>
    </g>
  </svg>
  <p class="view-label">[−][Сверху][2D-каркас]</p>
  <div class="doc-buttons">
    <button aria-label="Свернуть чертеж"><svg width="12" height="12"><path d="M.5 6.500h11v4H.5z" fill="#eee" stroke="#555"/></svg></button>
    <button aria-label="Восстановить чертеж"><svg width="12" height="12"><path d="M3 2V.5h8.500v8H10M.5 3.500h8v8h-8zM3 6h3v3H3z" fill="none" stroke="#444"/></svg></button>
    <button aria-label="Закрыть чертеж"><svg width="12" height="12"><path d="M2 1.500l8 9M10 1.500l-8 9" stroke="#555" stroke-width="4"/><path d="M2 2l8 8M10 2l-8 8" stroke="#eee" stroke-width="1"/></svg></button>
  </div>
  <div class="viewcube">
    <span class="n">С</span><span class="w">З</span><button class="face">Верх</button><span class="e">В</span><span class="s">Ю</span>
  </div>
  <button class="ucs">МСК <i></i></button>
  <div class="navbar">
    <svg width="33" height="212" fill="none" stroke="#dcdcdc"><circle cx="17" cy="30" r="10"/><circle cx="17" cy="30" r="5"/><path d="M6 58h23M6 160h23M6 166h23M6 172h23"/><path d="M8 76v-8c0-4 4-4 4 0v-2c0-4 5-4 5 0v-1c0-4 5-3 5 1v1c0-3 4-3 4 1v10l-4 8h-9zM8 94l16 16M24 94L8 110M17 130v24M6 143h23M17 130l-3 4h6zM17 154l-3-4h6zM6 143l4-3v6zM29 143l-4-3v6zM7 177h16v15H7z"/></svg>
  </div>
</main>

<section class="command">
  <div class="command-grip">
    <svg width="20" height="51"><path d="M3 4.500h16M3 7.500h16" stroke="#999" stroke-dasharray="2 1" stroke-width="2"/><path d="M7 17l7 8M14 17l-7 8" stroke="#fff" stroke-width="2"/><path d="M5 40a4 4 0 0 0 5 5l7 7" fill="none" stroke="#fff" stroke-width="2.500"/><path d="M9 38v5" stroke="#fff" stroke-width="2"/></svg>
  </div>
  <p class="command-history">Команда:</p>
  <label class="command-line"><svg width="14" height="14"><path d="M.5.500h13v13H.5z" fill="#d8dadd" stroke="#999"/><path d="M3 4l3 3-3 3M7 10.500h4" fill="none" stroke="#333" stroke-width="1.500"/></svg><i class="caret grey"></i><input type="text" aria-label="Командная строка" placeholder="Введите команду"></label>
</section>

<footer class="statusbar">
  <nav class="layout-tabs"><button class="active">Модель</button><button>Лист1</button><button>Лист2</button><button class="plus" aria-label="Новый лист">+</button></nav>
  <div class="status">
    <div class="cell coords">16800.8929, 7611.9991, 0.0000</div>
    <div class="cell"><button class="text mode">МОДЕЛЬ</button></div>
    <div class="cell">
      <button aria-label="Сетка"><svg width="16" height="16" stroke="#ccc"><path d="M2.500 1v14M6.500 1v14M10.500 1v14M14.500 1v14"/><path d="M0 3.500h16M0 7.500h16M0 11.500h16" stroke-dasharray="1 1"/></svg></button>
      <button aria-label="Шаг"><svg width="16" height="16" stroke="#bbb"><path stroke-dasharray="1 2" d="M1 1.500h15M1 4.500h15M1 7.500h15M1 10.500h15M1 13.500h15"/></svg></button>
      <button class="drop" aria-label="Параметры шага"><i class="caret lg"></i></button>
    </div>
    <div class="cell"><button aria-label="Зависимости"><svg width="16" height="16"><path d="M4 9h5v6H4z" fill="#bbb"/><path d="M8.500 9V2.500h4v4h-4" fill="none" stroke="#bbb"/></svg></button></div>
    <div class="cell"><button aria-label="Динамический ввод"><svg width="16" height="16"><path d="M5 1v8M1 5h8" stroke="#2b8cf0"/><path d="M6 9h10v5H6z" fill="#2b8cf0"/></svg></button></div>
    <div class="cell">
      <button aria-label="Орто"><svg width="16" height="16"><path d="M2.500 1v12.500H15M2.500 7h6v6" fill="none" stroke="#2b8cf0" stroke-width="1.500"/></svg></button>
      <button aria-label="Полярное отслеживание"><svg width="16" height="16"><circle cx="7.500" cy="8" r="6" fill="none" stroke="#bbb" stroke-width="1.500"/><path d="M7 8.500h9M7 8l5-6" stroke="#bbb"/></svg></button>
      <button class="drop" aria-label="Углы"><i class="caret lg"></i></button>
      <button aria-label="Изометрия"><svg width="16" height="16"><path d="M1 1l14 14M7.500 1v14M8 9l6-3" stroke="#bbb" fill="none"/></svg></button>
      <button class="drop" aria-label="Плоскости"><i class="caret lg"></i></button>
    </div>
    <div class="cell">
      <button aria-label="Отслеживание"><svg width="16" height="16"><path d="M15 13.500H1L12 3" stroke="#bbb" fill="none"/><circle cx="6" cy="10" r="2" fill="#888"/></svg></button>
      <button aria-label="Привязка"><svg width="16" height="16"><path d="M3.500 3.500h10v11h-10z" fill="none" stroke="#2b8cf0" stroke-width="1.500"/><path d="M1 1h5v5H1z" fill="#21c03a"/></svg></button>
      <button class="drop" aria-label="Параметры привязки"><i class="caret lg"></i></button>
    </div>
    <div class="cell"><button aria-label="Толщина линий"><svg width="18" height="16"><path d="M1 1h17v3H1zM1 6h13v3H1zM1 11h16v1H1zM1 14h10v1H1z" fill="#2b8cf0"/></svg></button><button class="drop" aria-label="Вес"><i class="caret lg"></i></button></div>
    <div class="cell"><button aria-label="Прозрачность"><svg width="16" height="16"><path d="M1.500 1.500h13v13h-13z" fill="none" stroke="#bbb"/><path d="M2 4h12M2 8h12M2 12h12" stroke="#ccc" stroke-width="2" stroke-dasharray="2 2"/><path d="M4 6h12M4 10h10" stroke="#ccc" stroke-width="2" stroke-dasharray="2 2"/></svg></button></div>
    <div class="cell"><button aria-label="Циклический выбор"><svg width="16" height="16"><path d="M3 0v6M0 3h6" stroke="#ccc"/><path d="M3 5h7v6H3z" fill="#999"/><path d="M6 7h8v7H6z" fill="#9fc58a"/></svg></button></div>
    <div class="cell"><button aria-label="3D привязка"><svg width="16" height="16"><path d="M3 5l6-3 6 3v6l-6 4-6-4zM3 5l6 3 6-3M9 8v7" fill="none" stroke="#ccc"/><path d="M0 0h5v5H0z" fill="#21c03a"/></svg></button><button class="drop" aria-label="Параметры 3D"><i class="caret lg"></i></button></div>
    <div class="cell">
      <button aria-label="ПСК"><svg width="16" height="16"><path d="M2.500 1v12.500H15M3 13l9-9M8 3l5-1-1 5" fill="none" stroke="#ccc"/></svg></button>
      <button aria-label="Фильтр"><svg width="16" height="16"><path d="M2 5l6-3 6 3v6l-6 4-6-4zM2 5l6 3 6-3M8 8v7" fill="none" stroke="#aaa"/></svg></button>
      <button class="drop" aria-label="Фильтры"><i class="caret lg"></i></button>
      <button aria-label="Гизмо"><svg width="16" height="16"><path d="M2 5l6-3 5 3v6l-5 3-6-3z" fill="none" stroke="#888"/><path d="M8 1v7" stroke="#7a7aff"/><path d="M8 8l7 5" stroke="#c04040" stroke-width="2"/><path d="M8 8l-6 4" stroke="#40a040"/></svg></button>
      <button class="drop" aria-label="Гизмо меню"><i class="caret lg"></i></button>
    </div>
    <div class="cell">
      <button aria-label="Аннотации"><svg width="16" height="16"><path d="M7 1h3l1 7 4 7h-3l-4-4-4 4H1l5-7z" fill="#2b8cf0"/><circle cx="12" cy="4" r="3" fill="none" stroke="#2b8cf0"/></svg></button>
      <button aria-label="Автомасштаб"><svg width="16" height="16"><path d="M6 1h3l1 7 4 7h-3l-4-4-3 4H1l5-7zM11 0l4 2-3 3z" fill="#bbb"/></svg></button>
      <button aria-label="Масштаб аннотаций"><svg width="16" height="16"><path d="M7 1h2l1 8 4 6h-2l-4-3-4 3H2l4-6z" fill="#bbb"/></svg></button>
      <button class="text">1:100 / 1%<i class="caret lg"></i></button>
    </div>
    <div class="cell"><button aria-label="Рабочее пространство"><svg width="16" height="16"><circle cx="8" cy="8" r="4" fill="none" stroke="#bbb" stroke-width="3"/><circle cx="8" cy="8" r="6" fill="none" stroke="#bbb" stroke-width="2" stroke-dasharray="2 2.700"/></svg></button><button class="drop" aria-label="Пространства"><i class="caret lg"></i></button></div>
    <div class="cell"><button aria-label="Монитор аннотаций"><svg width="16" height="16"><path d="M8 1v14M1 8h14" stroke="#bbb" stroke-width="2"/></svg></button></div>
    <div class="cell"><button aria-label="Единицы"><svg width="16" height="16"><path d="M5 1h6v14H5z" fill="#bbb"/><path d="M8 3.500h3M8 6.500h3M8 9.500h3M8 12.500h3" stroke="#555"/></svg></button><button class="text">Десятичные<i class="caret lg"></i></button></div>
    <div class="cell"><button aria-label="Свойства"><svg width="16" height="16"><path d="M4.500 2.500h7v11h-7z" fill="none" stroke="#bbb"/><path d="M6 5.500h4M6 8.500h4M6 11.500h4" stroke="#bbb" stroke-dasharray="1 1"/></svg></button></div>
    <div class="cell"><button aria-label="Аппаратное ускорение"><svg width="18" height="18"><circle cx="9" cy="9" r="8" fill="#1169c4"/><path d="M5 9l3 4 6-8" fill="none" stroke="#2a8ae8" stroke-width="2"/></svg></button></div>
    <div class="cell roomy">
      <button aria-label="Изолировать"><svg width="16" height="16"><path d="M1 1h8v7H1z" fill="#d8e8f4"/><path d="M6 8l4-4 6 9-5 2z" fill="#86b02c"/><path d="M2 9h6v5H2z" fill="#d8e860"/><path d="M8 5h3v4H8z" fill="#2a6ab0"/></svg></button>
      <button aria-label="Объекты"><svg width="16" height="16"><path d="M1.500 1.500h5v5h-5zM5 14l3-6 3 6z" fill="none" stroke="#ccc"/><circle cx="12" cy="7" r="3" fill="none" stroke="#ccc"/></svg></button>
    </div>
    <div class="cell roomy">
      <button aria-label="Очистить экран"><svg width="16" height="16"><path d="M.5 2.500h15v11H.500z" fill="none" stroke="#ccc"/><path d="M9 7l4-3M10 4h3v3M7 9l-4 3M3 9v3h3" stroke="#ccc" fill="none"/></svg></button>
      <button aria-label="Адаптация"><svg width="16" height="16"><path d="M1 2h14v2H1zM1 7h14v2H1zM1 12h14v2H1z" fill="#bbb"/></svg></button>
    </div>
  </div>
</footer>

<footer class="taskbar">
  <button class="task" aria-label="Пуск"><svg width="28" height="26"><use href="#i-winlogo"/></svg></button>
  <button class="task" aria-label="Проводник"><svg width="34" height="32"><path d="M2 3h12l2 3h16v22H2z" fill="#f2dd8a"/><path d="M4 3h7v3H4z" fill="#e04a3a"/><path d="M14 2h8v4h-8z" fill="#58b04a"/><path d="M24 3h6v4h-6z" fill="#4a90d8"/><path d="M2 9h30v18H2z" fill="#fbeeb0"/><path d="M6 31V19h22v12h-5v-7H11v7z" fill="#8fd0f0" stroke="#4aa0d0"/></svg></button>
  <button class="task open" aria-label="Chrome"><svg width="30" height="30"><circle cx="15" cy="15" r="14" fill="#f4c81e"/><path d="M15 1a14 14 0 0 1 12.500 7.500H15L9 18 2.800 8A14 14 0 0 1 15 1z" fill="#df4232"/><path d="M2.800 8L9.500 19l5.500 2.500L12 29A14 14 0 0 1 2.800 8z" fill="#36a350"/><circle cx="15" cy="15" r="6.500" fill="#fff"/><circle cx="15" cy="15" r="5" fill="#3b78d8"/></svg></button>
  <button class="task open" aria-label="Camtasia"><svg width="32" height="32"><path d="M0 0h32v28H0z" fill="#fff"/><path d="M0 28h28l4 4H4z" fill="#3d5c1c"/><path d="M24 5h-9l-6 5v9l6 5h9v-5h-7l-3-2v-5l3-2h7z" fill="#587f28"/><path d="M24 5h-9l-2 2 4 3h7zM24 24v-5h-7l3 5z" fill="#26331a"/></svg></button>
  <button class="task open current" aria-label="AutoCAD"><svg width="34" height="34"><rect width="34" height="34" fill="#f4e6ea"/><path d="M0 28c8-6 22-8 34-6v12H0z" fill="#d98a9a"/><path d="M15 3h4l8 20-7 3-1-3h-4l-1 3-7-3z" fill="#a50f24"/></svg></button>
  <div class="tray">
    <button aria-label="Скрытые значки"><svg width="8" height="5"><path d="M0 5l4-5 4 5z" fill="#fff"/></svg></button>
    <button aria-label="Центр поддержки"><svg width="16" height="16"><path d="M2 1v14" stroke="#fff" stroke-width="2"/><path d="M3 2h6v2h6l-2 3 2 3H8V8H3z" fill="#fff"/></svg></button>
    <button aria-label="Windows"><svg width="16" height="16"><use href="#i-winlogo"/></svg></button>
    <button aria-label="Сведения"><svg width="16" height="16"><circle cx="8" cy="8" r="8" fill="#f2a82c"/><path d="M7 3h2v2H7zM7 7h2v6H7z" fill="#fff"/></svg></button>
    <button aria-label="Сеть"><svg width="16" height="16"><path d="M5.500 4.500h10v7h-10zM8 14.500h6M11 12v3M.5 1.500h4v4h-4zM2.500 6v8" fill="none" stroke="#fff" stroke-width="1.500"/></svg></button>
    <button aria-label="Громкость"><svg width="16" height="16"><path d="M1 5h3l4-4v14l-4-4H1z" fill="#fff"/><path d="M10 5c2 2 2 4 0 6M12 3c3 3 3 7 0 10" fill="none" stroke="#fff"/></svg></button>
    <button class="lang">РУС</button>
    <div class="clock"><time>16:17</time><time>18.08.2015</time></div>
  </div>
</footer>
</body>
</html>
```
FILE: styles.css
```css
* { box-sizing: border-box; }
body {
  margin: 0;
  height: 100vh;
  display: flex;
  flex-direction: column;
  overflow: hidden;
  background: #363636;
  color: #f0f0f0;
  font: 11px/16px "Open Sans", "Noto Sans", sans-serif;
}
button, input, select { font: inherit; color: inherit; border: 0; padding: 0; margin: 0; background: none; outline: 0; }
button { display: flex; align-items: center; justify-content: center; white-space: nowrap; }
svg { flex: none; display: block; }
p, h2 { margin: 0; font-weight: 400; font-size: 11px; }
.defs { position: absolute; }
.caret { flex: none; width: 6px; height: 4px; background: #fff; clip-path: polygon(0 0, 100% 0, 50% 100%); }
.caret.lg { width: 8px; height: 5px; }
.caret.grey { background: #777; }

/* Title bar and ribbon tabs */
.top { flex: none; display: grid; grid-template-columns: 41px 1fr; grid-template-rows: 24px 21px; background: #505050; }
.app-button { grid-row: 1 / 3; width: 41px; height: 41px; border: 1px solid #111; background: linear-gradient(#a8a8a8, #6f6f6f); }
.titlebar { display: flex; background: #e9ebea; border-bottom: 1px solid #2c2c2c; }
.qat, .infocenter { display: flex; background: linear-gradient(#8c8c8c, #545454); }
.qat { width: 214px; padding-left: 4px; }
.qat button { width: 24px; }
.qat .narrow { width: 12px; }
.qat .more { width: 18px; }
.caption { flex: 1; display: flex; justify-content: center; gap: 20px; padding-top: 1px; color: #1a1a1a; font-size: 14px; line-height: 23px; }
.infocenter { width: 445px; }
.infocenter button { width: 24px; gap: 4px; }
.infocenter .expand { width: 15px; }
.infocenter input { width: 179px; height: 20px; margin-top: 2px; padding-left: 2px; border: 1px solid #3c3c3c; background: #777; font-style: italic; }
.infocenter input::placeholder { color: #c4c4c4; opacity: 1; }
.infocenter .signin { width: 120px; }
.infocenter .wide { width: 28px; }
.infocenter button:nth-last-child(2) { width: 34px; }
.infocenter .help { width: 44px; gap: 6px; margin-left: 1px; border-left: 1px solid #777; }
.window-buttons { width: 122px; padding-left: 22px; display: flex; }
.window-buttons button { width: 25px; height: 21px; }
.window-buttons .close { width: 46px; height: 19px; margin-left: 2px; background: #c4c4c4; }
.ribbon-tabs { display: flex; padding-left: 6px; border-bottom: 1px solid #333; }
.ribbon-tabs button { height: 20px; padding: 1px 11px 0 10px; color: #d8d8d8; }
.ribbon-tabs .active { margin-top: 3px; height: 17px; padding: 0 9px 1px; border: 1px solid #777; border-bottom: 0; background: linear-gradient(#6c6c6c, #5a5a5a); color: #fff; }
.ribbon-tabs .ribbon-mode { gap: 6px; padding-left: 22px; }

/* Ribbon */
.ribbon { position: relative; flex: none; display: flex; padding-left: 2px; background: linear-gradient(90deg, #5a5a5a 1880px, #3c3c3c); border-bottom: 1px solid #8a8a8a; }
.panel { flex: none; display: flex; flex-direction: column; background: #5b5b5b; border-right: 1px solid #444; box-shadow: inset 1px 0 #686868; }
.panel-body { display: grid; height: 77px; padding-top: 4px; }
.panel-title { height: 21px; display: flex; align-items: center; justify-content: center; gap: 6px; background: linear-gradient(#5b5b5b, #515151 30%, #4a4a4a); }
.big { flex-direction: column; justify-content: flex-start; padding-top: 2px; height: 72px; line-height: 15px; }
.big span { margin-top: 4px; text-align: center; }
.big .caret { margin-top: 2px; }
.col { display: flex; flex-direction: column; min-width: 0; }
.tool { height: 24px; gap: 6px; justify-content: flex-start; }
.tool .caret { margin-left: 5px; }
.draw { width: 260px; }
.draw .panel-body { grid-template-columns: 53px 70px 47px 45px 1fr; }
.draw .tool { padding-left: 7px; }
.modify { width: 381px; }
.modify .panel-body { grid-template-columns: 99px 145px 102px 1fr; padding-left: 8px; }
.annotate { width: 159px; }
.annotate .panel-body { grid-template-columns: 58px 1fr; }
.layers { width: 333px; }
.layers .panel-body { grid-template-columns: 59px 1fr; }
.combo { display: flex; align-items: center; height: 21px; margin: 1px 0 2px; padding-right: 2px; border: 1px solid #333; background: linear-gradient(#565656, #6a6a6a); }
.combo select { flex: 1; min-width: 0; appearance: none; overflow: hidden; }
.layer-combo { width: 209px; padding-left: 4px; gap: 3px; }
.layer-combo select { padding-left: 3px; }
.icon-row { display: flex; height: 24px; }
.icon-row button { width: 24px; }
.icon-row .tool { width: auto; padding-left: 4px; gap: 5px; }
.block { width: 160px; }
.block .panel-body { grid-template-columns: 52px 1fr; }
.block .tool { gap: 6px; }
.props { width: 244px; }
.props .panel-body { grid-template-columns: 86px 18px 137px; }
.prop-icons { gap: 8px; padding-top: 4px; }
.prop-combos .combo { gap: 10px; padding-left: 12px; }
.prop-combos .line { gap: 2px; padding-left: 8px; }
.props .panel-title, .view .panel-title { display: grid; padding-right: 6px; }
.props .panel-title::before, .view .panel-title::before { content: ""; }
.props .panel-title { grid-template-columns: 80px auto 8px 1fr; }
.view .panel-title { grid-template-columns: 4px auto 8px 1fr; }
.launcher { justify-self: end; }
.groups { width: 74px; }
.groups .panel-body { grid-template-columns: 47px 1fr; }
.groups .tool { width: 24px; padding-left: 4px; }
.groups .pressed { padding-left: 3px; border: 1px solid #2d4675; background: linear-gradient(#5b7db5, #7f9fce); }
.utils { width: 106px; }
.utils .panel-body { grid-template-columns: 83px 1fr; }
.clipboard { width: 101px; }
.clipboard .panel-body { grid-template-columns: 76px 1fr; }
.view { width: 69px; }
.marker { position: absolute; left: 801px; top: 20px; pointer-events: none; }

/* Drawing file tabs */
.file-tabs { flex: none; display: flex; align-items: flex-end; height: 29px; padding-left: 15px; background: #363636; border-bottom: 4px solid #575757; }
.file-tab { width: 134px; height: 22px; padding: 2px 17px 0; justify-content: flex-start; background: linear-gradient(#565656, #4a4a4a); color: #b4b4b4; clip-path: polygon(0 100%, 6px 0, 124px 0, 100% 100%); }
.file-tab.active { margin-left: -8px; padding-left: 14px; justify-content: space-between; background: linear-gradient(#7b7b7b, #606060); color: #fff; }
.add-tab { width: 21px; height: 17px; margin-bottom: 1px; border-radius: 5px; background: #4c4c4c; color: #ccc; font-weight: 700; }

/* Drawing area */
.viewport { position: relative; flex: 1; min-height: 0; background: #fefefe; border-right: 8px solid #bccbe8; color: #222; }
.drawing { width: 100%; height: 100%; }
.axes { fill: none; stroke: #dc1238; }
.labels { fill: #c8143a; font: italic 14px "Open Sans", sans-serif; text-anchor: middle; }
.view-label { position: absolute; left: 3px; top: 6px; font-size: 12px; }
.doc-buttons { position: absolute; right: 10px; top: 9px; display: flex; gap: 8px; }
.viewcube { position: absolute; right: 19px; top: 36px; width: 128px; display: grid; grid-template-columns: 1fr 52px 1fr; grid-template-rows: 27px 1fr 27px; row-gap: 17px; align-items: center; justify-items: center; font-size: 20px; font-weight: 600; line-height: 27px; color: #fff; -webkit-text-stroke: 1px #bdbdbd; }
.viewcube .n, .viewcube .s { grid-column: 1 / 4; }
.viewcube .w { justify-self: start; }
.viewcube .e { justify-self: end; }
.viewcube .face { width: 52px; height: 52px; border: 1px solid #999; background: #ececee; color: #8c8c8c; font-size: 12px; font-weight: 400; -webkit-text-stroke: 0; }
.ucs { position: absolute; right: 62px; top: 193px; width: 43px; height: 17px; gap: 8px; background: #e9e8f3; color: #8a8a96; }
.ucs i { width: 8px; height: 2px; background: #cfcfe0; }
.navbar { position: absolute; right: 3px; top: 234px; width: 35px; height: 214px; border: 1px solid #c4c4c4; border-radius: 5px; background: #f7f7f7; }

/* Command window */
.command { flex: none; display: grid; grid-template: 29px 22px / 23px 1fr; border-top: 3px solid #575757; border-bottom: 2px solid #6a6a6a; color: #111; font: 12px/16px "Liberation Mono", monospace; }
.command-grip { grid-row: 1 / 3; background: linear-gradient(90deg, #4a4a4a, #707070); overflow: hidden; }
.command-history { padding: 12px 0 0 2px; background: #c6c6c6; border-bottom: 1px solid #777; font-size: 12px; }
.command-line { display: flex; align-items: center; gap: 5px; padding-left: 5px; background: #fff; }
.command-line input { flex: 1; padding-left: 1px; font-style: italic; }
.command-line input::placeholder { color: #8a8a8a; opacity: 1; }

/* Status bar */
.statusbar { flex: none; display: flex; height: 28px; background: #363636; }
.layout-tabs { display: flex; padding-left: 13px; }
.layout-tabs button { width: 58px; height: 17px; margin-right: -3px; background: #4d4d4d; color: #a8a8a8; clip-path: polygon(0 0, 100% 0, 50px 100%, 8px 100%); }
.layout-tabs .active { width: 67px; margin-right: 0; background: #6b6b6b; color: #fff; font-weight: 700; clip-path: polygon(0 0, 100% 0, 60px 100%, 6px 100%); }
.layout-tabs .plus { width: 26px; margin-left: 4px; clip-path: none; border-radius: 4px; background: #444; }
.status { display: flex; margin-left: auto; background: #4e4e4e; }
.cell { display: flex; height: 26px; border: 1px solid #6f6f6f; border-right: 0; }
.cell button { width: 24px; }
.cell .drop { width: 16px; }
.cell .text { width: auto; padding: 0 4px; gap: 5px; }
.cell .mode, .coords { font-size: 12px; }
.coords { width: 183px; align-items: center; justify-content: center; white-space: nowrap; }
.roomy { padding: 0 2px; }

/* Taskbar */
.taskbar { flex: none; display: flex; height: 40px; gap: 2px; background: radial-gradient(ellipse 26px 60px at calc(100% - 219px) 20px, #8e2f50, #8e2f5000), linear-gradient(#a67f99, #997589); }
.task { width: 60px; border: 1px solid transparent; }
.task:first-child { width: 48px; }
.task:nth-child(2) { padding-left: 2px; }
.task.open { border-color: #c9aebf; background: #b291a6; }
.task.current { border-color: #fff; background: #cdb5c4; }
.tray { margin-left: auto; display: flex; padding-right: 9px; }
.tray button { width: 24px; }
.tray .lang { width: 46px; }
.clock { width: 70px; display: flex; flex-direction: column; justify-content: center; text-align: center; }
```
